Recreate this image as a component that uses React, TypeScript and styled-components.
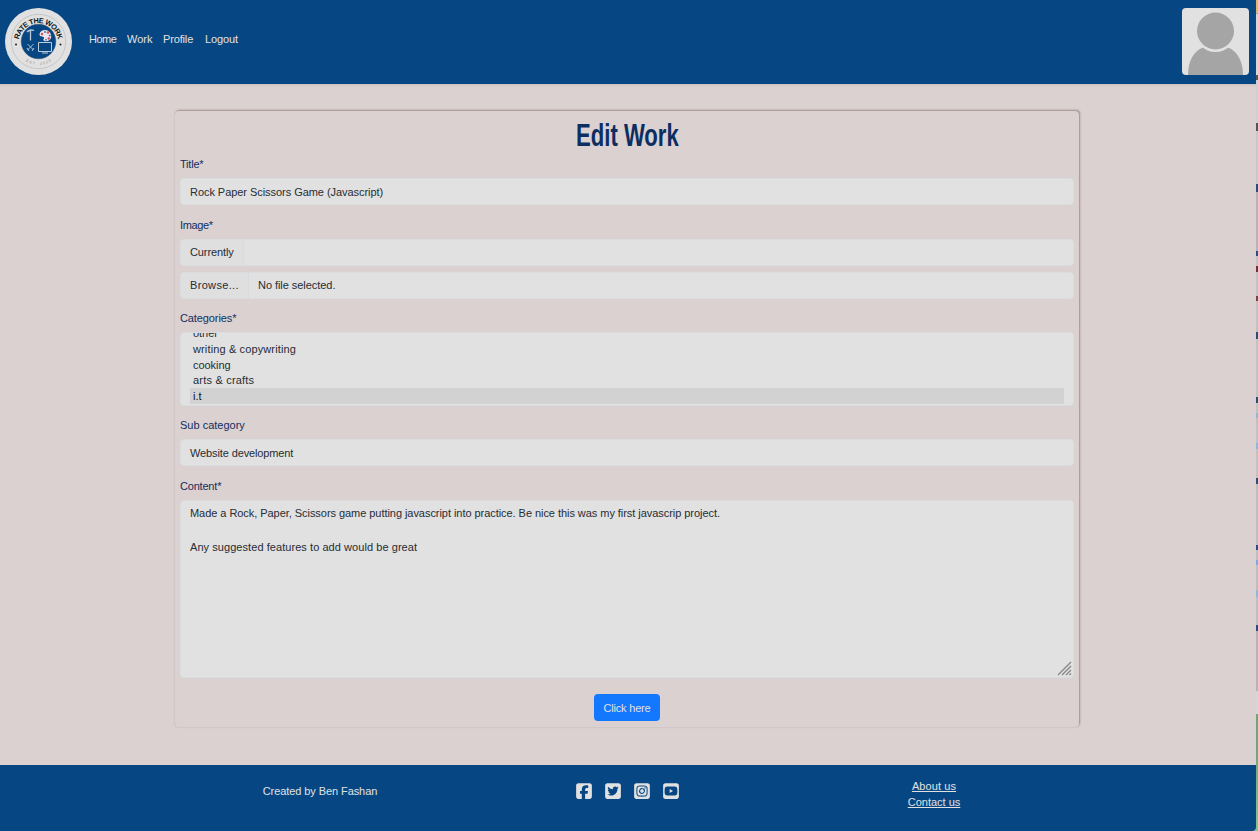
import React from 'react';
import styled, { createGlobalStyle } from 'styled-components';
import { FaSquareFacebook, FaSquareTwitter, FaSquareInstagram, FaSquareYoutube } from 'react-icons/fa6';

const Global = createGlobalStyle`
  * { box-sizing: border-box; }
  body { margin: 0; background: #dbd1d0; overflow: hidden; font-family: "Liberation Sans", Arial, sans-serif; font-size: 11px; }
`;
const Shell = styled.div`display: flex; width: 1258px; height: 831px; background: #7cc58a;`;
const Page = styled.div`
  width: 1256px; height: 831px; display: flex; flex-direction: column;
  background: #dbd1d0; border-bottom-right-radius: 4px; overflow: hidden;
`;
const Text = styled.span<{ $ls?: number }>`letter-spacing: ${p => p.$ls ?? -0.05}px; white-space: pre;`;
const Header = styled.header`
  height: 84px; flex: none; background: #064783; display: flex; align-items: flex-start;
  padding: 8px 7px 0 5px; box-shadow: 0 1px 2px rgba(90, 60, 60, 0.12);
`;
const Nav = styled.nav`display: flex; margin: 23px auto 0 17px; line-height: 16px; color: #e1e1e1;`;
const NavLink = styled.a<{ $w: number }>`width: ${p => p.$w}px; color: inherit; white-space: nowrap;`;
const Avatar = styled.svg`display: block; width: 67px; height: 67px; border-radius: 4px; background: #e1e1e1;`;
const Main = styled.main`flex: 1; padding: 27px 0 0 175px;`;
const Card = styled.form`
  width: 904px; height: 616px; padding: 4px 5px 5px 5px; border-radius: 4px; color: #112e5f;
  box-shadow: 1px -1px 2px rgba(80, 60, 60, 0.42), 0 0 2px rgba(120, 80, 80, 0.18);
`;
const Heading = styled.h1`
  margin: 0; height: 41px; line-height: 41px; text-align: center; color: #0c2e62;
  font-family: "Liberation Sans", sans-serif; font-size: 32px; font-weight: 700;
`;
const Condensed = styled.span`display: inline-block; transform: scaleX(0.69);`;
const Label = styled.label`display: block; height: 16px; line-height: 16px; margin-bottom: 6px;`;
const Field = styled.div<{ $after?: number }>`margin-bottom: ${p => p.$after ?? 12}px;`;
const Control = styled.div<{ $h?: number }>`
  height: ${p => p.$h ?? 27}px; border: 1px solid #dadddf; border-radius: 4px; background: #e1e1e1;
  color: #262d35; overflow: hidden; line-height: 26px; padding: 0 9px;
`;
const Group = styled(Control)`display: flex; padding: 0; line-height: 25px; & + & { margin-top: 6px; }`;
const Addon = styled.span<{ $w: number }>`
  width: ${p => p.$w}px; padding-left: 9px; background: #dfdfdf; border-right: 1px solid #d7dbde; margin-right: 9px; flex: none;
`;
const Options = styled(Control)`display: flex; flex-direction: column; justify-content: flex-end; padding-bottom: 1px;`;
const Option = styled.div<{ $on?: boolean }>`
  flex: none; height: 15.8px; line-height: 16px; padding-left: 3px;
  background: ${p => (p.$on ? '#d2d2d2' : 'transparent')}; color: ${p => (p.$on ? '#101218' : '#262d35')};
`;
const Area = styled(Control)`position: relative; line-height: 17px; padding-top: 4px;`;
const Line = styled.div`height: 17px;`;
const Grip = styled.svg`position: absolute; right: 1px; bottom: 1px; width: 15px; height: 15px;`;
const Button = styled.button`
  display: block; margin: 16px auto 0; width: 66px; height: 27px; padding: 1px 0 0; border: 0; border-radius: 4px;
  background: #1478ff; color: #e1e1e1; font: inherit;
`;
const Footer = styled.footer`
  height: 66px; flex: none; background: #064783; color: #e1e1e1; display: grid;
  grid-template-columns: 320px 1fr 320px; column-gap: 0; padding: 0 162px 0 160px;
`;
const Credit = styled.div`padding-top: 18px; line-height: 16px; text-align: center;`;
const Socials = styled.div`display: flex; justify-content: center; gap: 13px; padding-top: 17px; svg { width: 16px; height: 18px; }`;
const Links = styled.div`
  display: flex; flex-direction: column; align-items: center; padding-top: 13px; line-height: 16px;
  a { text-decoration: underline; }
`;
const Edge = styled.div`
  width: 2px; background: linear-gradient(#e0b873 0 13px, #aaa6a6 13px 14px, #d5d6d8 14px 75px, #555 75px 80px,
    #d0d0d1 80px 123px, #555 123px 131px, #c8c8ca 131px 184px, #2b4c7c 184px 192px, #b8b4b6 192px 251px,
    #2b4c7c 251px 256px, #c4c1c2 256px 266px, #703040 266px 272px, #c4c1c2 272px 296px, #6b4a45 296px 301px,
    #c4c1c2 301px 332px, #2b4c7c 332px 339px, #c4c1c2 339px 397px, #2b4c7c 397px 403px, #c4c1c2 403px 413px,
    #8bb8dc 413px 418px, #c4c1c2 418px 443px, #8bb8dc 443px 449px, #c4c1c2 449px 478px, #2b4c7c 478px 484px,
    #c0bdbe 484px 545px, #2b4c7c 545px 550px, #c0bdbe 550px 560px, #7fa8e0 560px 565px, #c0bdbe 565px 590px,
    #8bb8dc 590px 597px, #c0bdbe 597px 625px, #2b4c7c 625px 631px, #b7b2b3 631px 691px, #d6d6d6 691px 714px,
    #71a477 714px 750px, #7cc58a 820px);
`;

function Logo() {
  return (
    <svg width="67" height="67" viewBox="0 0 67 67">
      <defs>
        <path id="arcTop" d="M13.700 35a19.800 19.800 0 0 1 39.600 0" />
        <path id="arcBottom" d="M10 33.500a23.500 23.500 0 0 0 47 0" />
      </defs>
      <circle cx="33.500" cy="33.500" r="33.500" fill="#e1e1e1" />
      <circle cx="33.500" cy="33.500" r="27.200" fill="none" stroke="#b7b9bb" strokeWidth=".7" />
      <circle cx="33.500" cy="33.500" r="17.300" fill="#064783" stroke="#344b68" strokeWidth=".5" />
      <text fontFamily="Liberation Sans, sans-serif" fontWeight="700" fontSize="7.4" fill="#111820">
        <textPath href="#arcTop" startOffset="50%" textAnchor="middle" textLength="55">RATE THE WORK</textPath>
      </text>
      <text fontFamily="Liberation Sans, sans-serif" fontSize="3.6" fill="#888">
        <textPath href="#arcBottom" startOffset="50%" textAnchor="middle" textLength="27">EST. 2020</textPath>
      </text>
      <circle cx="11" cy="36.500" r="1" fill="#222" /><circle cx="55.500" cy="36.500" r="1" fill="#222" />
      <g fill="none" stroke="#bdcbd8">
        <path d="M22 24q3-3 7-1.500M25.500 22.500v10" strokeWidth="1.300" />
        <path d="M22.500 36l6 6M28.500 36l-6 6M22 40l2 3M29 40l-2 3" strokeWidth=".9" />
        <path d="M33.500 34.500h13v9h-13zM37 45h6" strokeWidth="1" />
      </g>
      <path d="M34.500 26c1-4.500 7.500-5.500 10.500-1.500 3.500 5.500-1 10-5.500 8.500-3-1 1-3-1-4s-4 0-4-3z" fill="#e8e6ec" />
      <g fill="#e4464d"><circle cx="37" cy="26" r="1.200" /><circle cx="43" cy="24.500" r="1.200" /><circle cx="43.800" cy="30.500" r="1.200" /></g>
      <g fill="#4b71bd"><circle cx="40" cy="24" r="1" /><circle cx="44.800" cy="27.500" r="1" /><circle cx="41" cy="31.700" r=".9" /></g>
    </svg>
  );
}

export default function App() {
  return (
    <>
      <Global />
      <Shell>
        <Page>
          <Header>
            <Logo />
            <Nav>
              <NavLink $w={38}><Text $ls={-0.5}>Home</Text></NavLink>
              <NavLink $w={36}><Text $ls={0}>Work</Text></NavLink>
              <NavLink $w={42}><Text $ls={-0.15}>Profile</Text></NavLink>
              <NavLink $w={40}><Text $ls={-0.1}>Logout</Text></NavLink>
            </Nav>
            <Avatar viewBox="0 0 67 67">
              <path d="M6 67C6 53 12 43 21 39.500H46C55 43 61 53 61 67z" fill="#a5a5a5" />
              <circle cx="33.500" cy="23" r="21" fill="#e1e1e1" />
              <circle cx="33.500" cy="23" r="18.500" fill="#a5a5a5" />
            </Avatar>
          </Header>
          <Main>
            <Card>
              <Heading><Condensed>Edit Work</Condensed></Heading>
              <Field>
                <Label><Text $ls={-0.2}>Title*</Text></Label>
                <Control><Text>Rock Paper Scissors Game (Javascript)</Text></Control>
              </Field>
              <Field $after={11}>
                <Label><Text $ls={-0.35}>Image*</Text></Label>
                <Group><Addon $w={63}><Text $ls={-0.1}>Currently</Text></Addon></Group>
                <Group><Addon $w={68}><Text $ls={0.33}>Browse...</Text></Addon><Text>No file selected.</Text></Group>
              </Field>
              <Field $after={11}>
                <Label><Text $ls={-0.1}>Categories*</Text></Label>
                <Options $h={74}>
                  <Option><Text>other</Text></Option>
                  <Option><Text $ls={0.13}>writing &amp; copywriting</Text></Option>
                  <Option><Text>cooking</Text></Option>
                  <Option><Text $ls={0.2}>arts &amp; crafts</Text></Option>
                  <Option $on><Text>i.t</Text></Option>
                </Options>
              </Field>
              <Field>
                <Label><Text $ls={0}>Sub category</Text></Label>
                <Control><Text $ls={-0.12}>Website development</Text></Control>
              </Field>
              <Field>
                <Label><Text $ls={-0.2}>Content*</Text></Label>
                <Area $h={178}>
                  <Line><Text>Made a Rock, Paper, Scissors game putting javascript into practice. Be nice this was my first javascrip project.</Text></Line>
                  <Line />
                  <Line><Text $ls={0.06}>Any suggested features to add would be great</Text></Line>
                  <Grip viewBox="0 0 15 15"><path d="M1 14L14 1M5 14l9-9M9 14l5-5M12.500 14l1.500-1.500" stroke="#858585" strokeWidth="1.300" /></Grip>
                </Area>
              </Field>
              <Button type="button"><Text $ls={-0.2}>Click here</Text></Button>
            </Card>
          </Main>
          <Footer>
            <Credit><Text $ls={-0.08}>Created by Ben Fashan</Text></Credit>
            <Socials><FaSquareFacebook /><FaSquareTwitter /><FaSquareInstagram /><FaSquareYoutube /></Socials>
            <Links><a><Text $ls={0.1}>About us</Text></a><a><Text $ls={0}>Contact us</Text></a></Links>
          </Footer>
        </Page>
        <Edge />
      </Shell>
    </>
  );
}
